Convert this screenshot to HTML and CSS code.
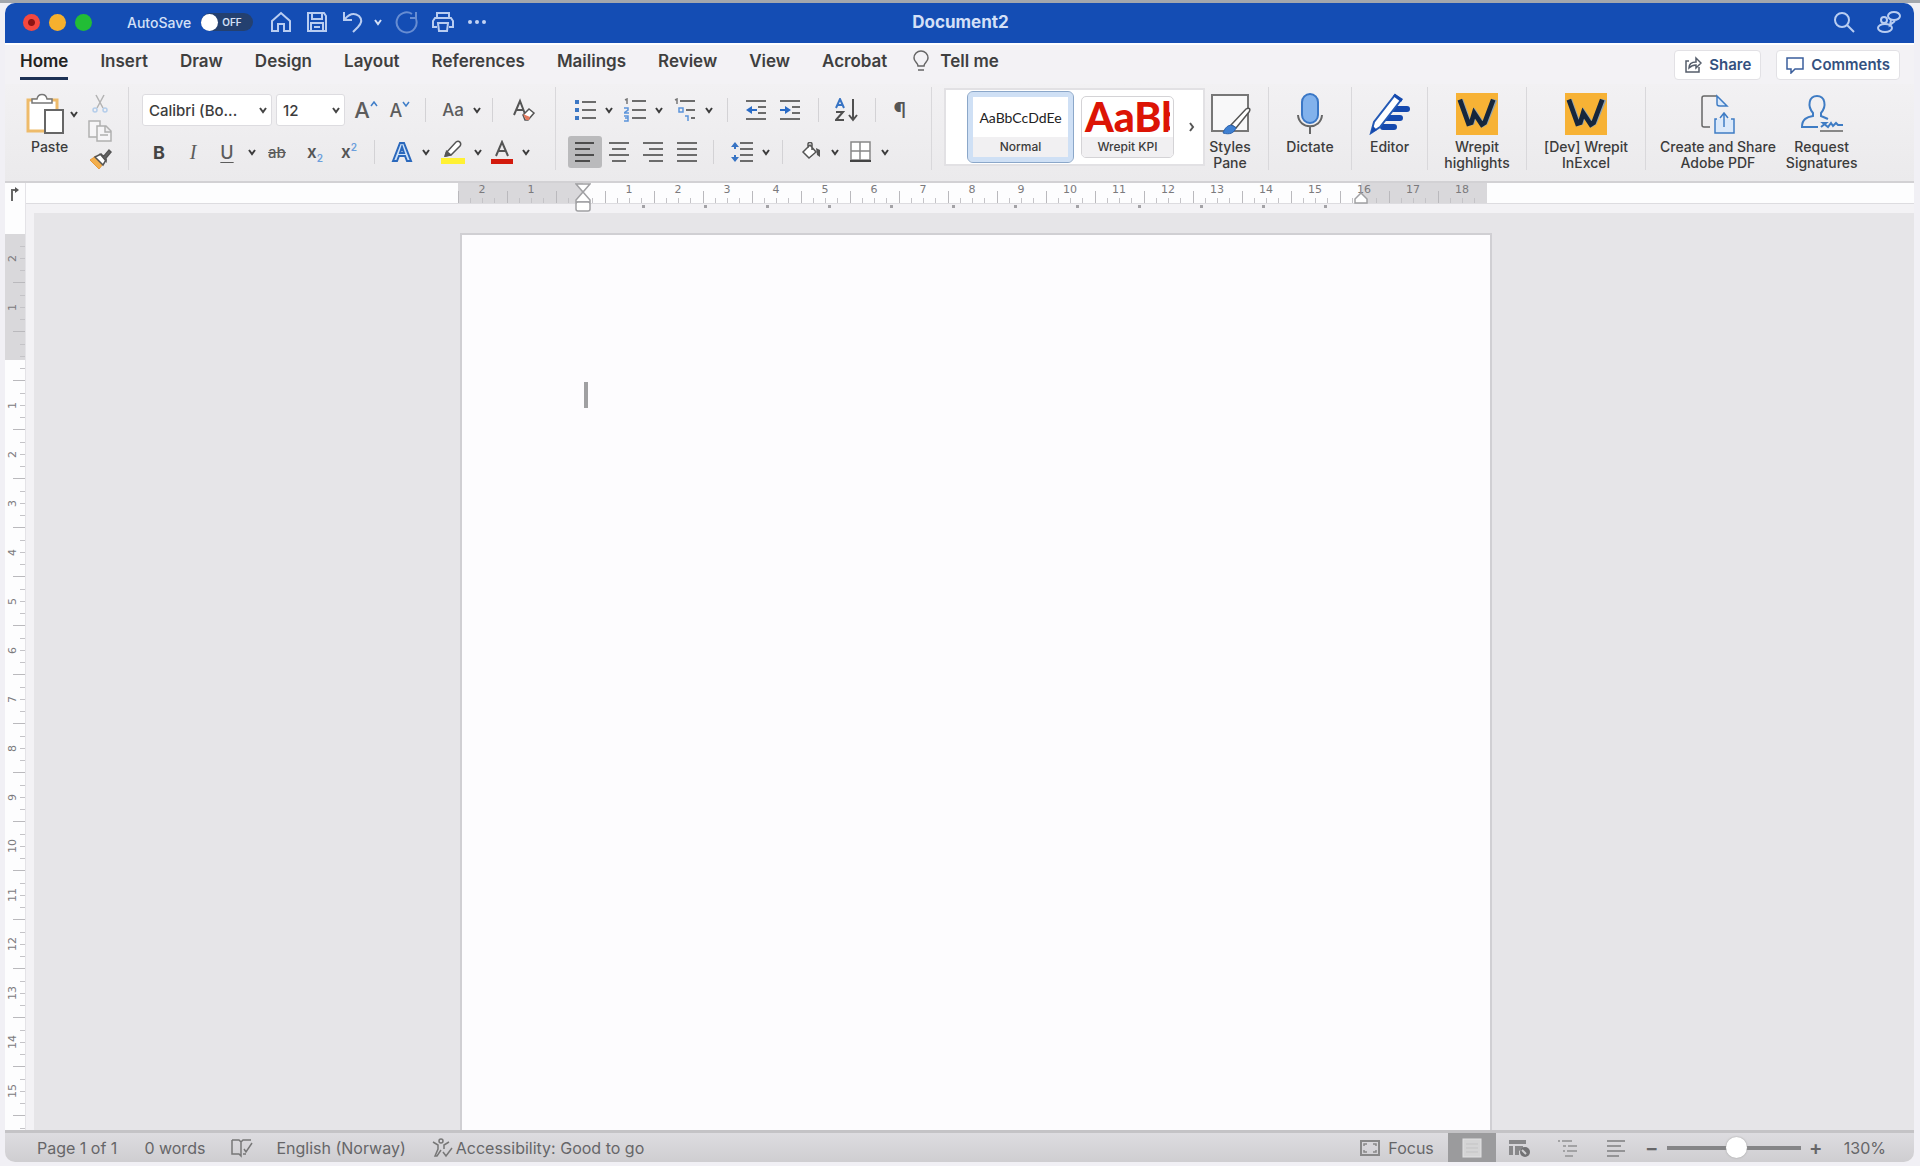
FILE: index.html
```html
<!DOCTYPE html>
<html lang="en">
<head>
<meta charset="utf-8">
<title>Document2</title>
<link rel="stylesheet" href="styles.css">
</head>
<body>
<svg class="sprite" aria-hidden="true">
  <symbol id="chevron" viewBox="0 0 10 10"><path d="M2 3l3 4 3-4" fill="none" stroke="currentColor" stroke-width="2"/></symbol>
  <symbol id="wrepit" viewBox="0 0 44 44"><rect width="44" height="44" fill="#f7b235"/><path d="M5 7l9 25 3-1 3-10 8 12 3-2 10-24" fill="none" stroke="#93a4ae" stroke-width="5"/><path d="M4 7l9 25 3-1 3-10 8 12 3-2 9-24" fill="none" stroke="#16263c" stroke-width="5"/></symbol>
</svg>
<div class="window">
  <header class="titlebar">
    <div class="titlebar-left">
      <div class="lights">
        <button class="light light-close" aria-label="Close"></button>
        <button class="light light-min" aria-label="Minimise"></button>
        <button class="light light-max" aria-label="Full screen"></button>
      </div>
      <label class="autosave" for="autosave">AutoSave
        <span class="switch"><input type="checkbox" id="autosave"><span class="switch-text">OFF</span></span>
      </label>
      <div class="quick">
        <button aria-label="Home"><svg width="24" height="24" viewBox="0 0 24 24"><path d="M3 11l9-8 9 8v10h-6v-7H9v7H3z"/></svg></button>
        <button aria-label="Save"><svg width="24" height="24" viewBox="0 0 24 24"><path d="M3 3h16l2 3v15H3zM7 3v6h10V3M6 21v-8h12v8M9 17h6"/></svg></button>
        <button class="undo" aria-label="Undo"><svg width="24" height="24" viewBox="0 0 24 24"><path d="M3 2v8h8M4 9c5-6 10-6 14-3 4 4 2 8-1 11l-5 5"/></svg><svg width="10" height="10"><use href="#chevron"/></svg></button>
        <button class="faded" aria-label="Redo"><svg width="24" height="24" viewBox="0 0 24 24"><path d="M17 4a10 10 0 1 0 4 5M21 2v6h-6"/></svg></button>
        <button aria-label="Print"><svg width="24" height="24" viewBox="0 0 24 24"><path d="M6 8V3h12v5M6 17H2v-6l2-3h16l2 3v6h-4M7 13h10l-1 8H8z"/></svg></button>
        <button aria-label="More"><svg width="20" height="24" viewBox="0 0 20 24"><g fill="#c3d3f3" stroke="none"><circle cx="3" cy="12" r="2"/><circle cx="10" cy="12" r="2"/><circle cx="17" cy="12" r="2"/></g></svg></button>
      </div>
    </div>
    <h1 class="title">Document2</h1>
    <div class="titlebar-right">
      <button aria-label="Search"><svg width="24" height="24" viewBox="0 0 24 24"><circle cx="10" cy="10" r="7"/><path d="M15 15l7 7"/></svg></button>
      <button aria-label="Presence"><svg width="26" height="26" viewBox="0 0 26 26"><ellipse cx="18" cy="7" rx="6" ry="4"/><path d="M15 11l-1 5 5-4"/><circle cx="8" cy="11" r="3"/><ellipse cx="9" cy="19" rx="7" ry="4"/></svg></button>
    </div>
  </header>

  <nav class="tabs">
    <a class="tab tab-active" href="#home">Home</a>
    <a class="tab" href="#insert">Insert</a>
    <a class="tab" href="#draw">Draw</a>
    <a class="tab" href="#design">Design</a>
    <a class="tab" href="#layout">Layout</a>
    <a class="tab" href="#references">References</a>
    <a class="tab" href="#mailings">Mailings</a>
    <a class="tab" href="#review">Review</a>
    <a class="tab" href="#view">View</a>
    <a class="tab" href="#acrobat">Acrobat</a>
    <a class="tab tell" href="#tell"><svg width="16" height="22" viewBox="0 0 16 22" fill="none" stroke="#666" stroke-width="1.5"><path d="M5 16c0-3-4-4-4-8a7 7 0 0 1 14 0c0 4-4 5-4 8zM5 20h6"/></svg>Tell me</a>
    <div class="tab-actions">
      <button class="pill"><svg width="18" height="18" viewBox="0 0 18 18" fill="none" stroke="#555d6b" stroke-width="1.5"><path d="M5 5H2v11h13v-5M5 12c0-4 3-6 7-6V2l5 5-5 5V9c-3 0-5 1-7 3z"/></svg>Share</button>
      <button class="pill"><svg width="18" height="18" viewBox="0 0 18 18" fill="none" stroke="#3a5e9c" stroke-width="1.5"><path d="M1 2h16v11H9l-4 4v-4H1z"/></svg>Comments</button>
    </div>
  </nav>

  <section class="ribbon" aria-label="Home tools">
    <div class="group clipboard">
      <button class="paste">
        <span class="paste-icon"><svg width="40" height="42" viewBox="0 0 40 42"><path d="M2 7h29v31H2z" fill="#fff" stroke="#eebb6a" stroke-width="3"/><path d="M6 10V6h5c1-6 9-6 10 0h5v4z" fill="#fff" stroke="#777" stroke-width="1.5"/><path d="M19 17h18v23H19z" fill="#fff" stroke="#666" stroke-width="2"/></svg><svg width="10" height="10"><use href="#chevron"/></svg></span>
        Paste
      </button>
      <div class="stack">
        <button aria-label="Cut"><svg width="22" height="20" viewBox="0 0 22 20" fill="none" stroke="#b3b3b3" stroke-width="1.5"><path d="M7 1l7 13M15 1L8 14"/><g stroke="#b4cdea"><circle cx="6" cy="16" r="2"/><circle cx="16" cy="16" r="2"/></g></svg></button>
        <button aria-label="Copy"><svg width="24" height="22" viewBox="0 0 24 22" fill="#f6f5f7" stroke="#b0b0b0" stroke-width="1.5"><path d="M1 1h11v16H1z"/><path d="M9 6h9l5 5v10H9zM17 6v6h6M12 15h8"/></svg></button>
        <button aria-label="Format painter"><svg width="24" height="22" viewBox="0 0 24 22"><path d="M2 12l9 9 4-5-7-8z" fill="#f2ae4c" stroke="#e59a3d"/><path d="M7 9l8 8 3-5-5-6z" fill="#fff" stroke="#555" stroke-width="1.5"/><path d="M13 7l3 1 5-6 2 2-5 6v3z" fill="#666" stroke="#555" stroke-width="1.5"/></svg></button>
      </div>
    </div>

    <div class="group font">
      <div class="row">
        <select class="field field-font" aria-label="Font"><option>Calibri (Bo...</option></select>
        <select class="field field-size" aria-label="Font size"><option>12</option></select>
        <button class="tool" aria-label="Grow font"><span class="glyph big">A</span><svg class="sup" width="8" height="6" viewBox="0 0 8 6"><path d="M1 5l3-4 3 4" fill="none" stroke="#3f7dc8" stroke-width="1.5"/></svg></button>
        <button class="tool" aria-label="Shrink font"><span class="glyph">A</span><svg class="sup" width="8" height="6" viewBox="0 0 8 6"><path d="M1 1l3 4 3-4" fill="none" stroke="#3f7dc8" stroke-width="1.5"/></svg></button>
        <span class="sep"></span>
        <button class="split" aria-label="Change case"><span class="glyph case">Aa</span><svg width="10" height="10"><use href="#chevron"/></svg></button>
        <span class="sep"></span>
        <button class="tool tool-clear" aria-label="Clear formatting"><svg width="24" height="24" viewBox="0 0 24 24" fill="none"><path d="M2 17L8 3l5 13M4 12h7" stroke="#555" stroke-width="2"/><path d="M11 17l6-6 5 4-6 7h-3z" fill="#fff" stroke="#555" stroke-width="1.5"/><path d="M11 16l3 6h3l1-3z" fill="#e4785c"/></svg></button>
      </div>
      <div class="row">
        <button class="tool glyph bold" aria-label="Bold">B</button>
        <button class="tool glyph italic" aria-label="Italic">I</button>
        <button class="tool glyph underline" aria-label="Underline">U</button>
        <button class="drop" aria-label="Underline styles"><svg width="10" height="10"><use href="#chevron"/></svg></button>
        <button class="tool glyph strike" aria-label="Strikethrough">ab</button>
        <button class="tool script script-first" aria-label="Subscript">x<sub>2</sub></button>
        <button class="tool script" aria-label="Superscript">x<sup>2</sup></button>
        <span class="sep"></span>
        <button class="split" aria-label="Text effects"><svg width="22" height="22" viewBox="0 0 22 22"><path d="M2 20L9 2h4l7 18h-4l-2-5H8l-2 5zM9 12h4l-2-6z" fill="#cfe2f8" stroke="#2a68bc" stroke-width="2"/></svg><svg width="10" height="10"><use href="#chevron"/></svg></button>
        <button class="split" aria-label="Highlight"><svg width="24" height="24" viewBox="0 0 24 24"><path d="M0 18h24v6H0z" fill="#fff133"/><path d="M5 13L15 2c3-2 6 1 4 4l-9 9-6 1z" fill="#fff" stroke="#555" stroke-width="1.5"/><path d="M5 10l6 5-7 2z" fill="#555"/></svg><svg width="10" height="10"><use href="#chevron"/></svg></button>
        <button class="split" aria-label="Font colour"><svg width="22" height="24" viewBox="0 0 22 24"><path d="M5 16l6-14 6 14M7 11h8" fill="none" stroke="#555" stroke-width="2"/><path d="M0 19h22v5H0z" fill="#d31a0d"/></svg><svg width="10" height="10"><use href="#chevron"/></svg></button>
      </div>
    </div>

    <div class="group paragraph">
      <div class="row">
        <button class="split" aria-label="Bullets"><svg width="22" height="22" viewBox="0 0 22 22" stroke="#6c6c6c" stroke-width="2"><path d="M8 3h14M8 11h14M8 19h14"/><path d="M1 3h4M1 11h4M1 19h4" stroke="#3b77c4" stroke-width="4"/></svg><svg width="10" height="10"><use href="#chevron"/></svg></button>
        <button class="split" aria-label="Numbering"><svg width="22" height="24" viewBox="0 0 22 24" stroke="#6c6c6c" stroke-width="2"><path d="M8 3h14M8 12h14M8 20h14"/><path d="M1 2l2-1v5" fill="none" stroke="#777" stroke-width="1.5"/><path d="M0 10h4v2l-4 3h5M0 18h4v5H0M1 20h3" fill="none" stroke="#5b94da" stroke-width="1.5"/></svg><svg width="10" height="10"><use href="#chevron"/></svg></button>
        <button class="split" aria-label="Multilevel list"><svg width="22" height="24" viewBox="0 0 22 24" stroke="#6c6c6c" stroke-width="2"><path d="M6 3h15M12 12h9M17 20h4"/><path d="M1 2l2-1v5" fill="none" stroke="#777" stroke-width="1.5"/><path d="M5 10h4v4H5zM11 18h3v5" fill="none" stroke="#5b94da" stroke-width="1.5"/></svg><svg width="10" height="10"><use href="#chevron"/></svg></button>
        <span class="sep"></span>
        <button class="tool" aria-label="Decrease indent"><svg width="20" height="20" viewBox="0 0 20 20" stroke="#6c6c6c" stroke-width="2"><path d="M0 1h20M12 7h8M12 13h8M0 19h20"/><path d="M11 10H5" stroke="#2a6bc6"/><path d="M0 10l6-4v8z" fill="#2a6bc6" stroke="none"/></svg></button>
        <button class="tool" aria-label="Increase indent"><svg width="20" height="20" viewBox="0 0 20 20" stroke="#6c6c6c" stroke-width="2"><path d="M0 1h20M12 7h8M12 13h8M0 19h20"/><path d="M0 10h6" stroke="#2a6bc6"/><path d="M11 10L5 6v8z" fill="#2a6bc6" stroke="none"/></svg></button>
        <span class="sep"></span>
        <button class="tool" aria-label="Sort"><svg width="24" height="24" viewBox="0 0 24 24" fill="none" stroke="#505050" stroke-width="2"><path d="M1 10l4-9 4 9M2 7h6" stroke="#3874c4"/><path d="M1 14h7l-7 8h8M18 1v20M14 17l4 5 4-5"/></svg></button>
        <span class="sep"></span>
        <button class="pilcrow" aria-label="Show formatting marks">¶</button>
      </div>
      <div class="row row-align">
        <button class="tool tool-on" aria-label="Align left"><svg width="20" height="20" viewBox="0 0 20 20" stroke="#4c4c4c" stroke-width="2"><path d="M0 1h19M0 7h15M0 13h19M0 19h15"/></svg></button>
        <button class="tool" aria-label="Centre"><svg width="20" height="20" viewBox="0 0 20 20" stroke="#6c6c6c" stroke-width="2"><path d="M0 1h20M3 7h14M0 13h20M3 19h14"/></svg></button>
        <button class="tool" aria-label="Align right"><svg width="20" height="20" viewBox="0 0 20 20" stroke="#6c6c6c" stroke-width="2"><path d="M0 1h20M6 7h14M0 13h20M6 19h14"/></svg></button>
        <button class="tool" aria-label="Justify"><svg width="20" height="20" viewBox="0 0 20 20" stroke="#6c6c6c" stroke-width="2"><path d="M0 1h20M0 7h20M0 13h20M0 19h20"/></svg></button>
        <span class="sep"></span>
        <button class="split" aria-label="Line spacing"><svg width="22" height="22" viewBox="0 0 22 22" stroke="#6c6c6c" stroke-width="2"><path d="M9 2h13M9 8h13M9 14h13M9 20h13"/><path d="M4 3v5M4 14v5" stroke="#3874c4"/><path d="M0 6l4-5 4 5zM0 16l4 5 4-5z" fill="#3874c4" stroke="none"/></svg><svg width="10" height="10"><use href="#chevron"/></svg></button>
        <span class="sep"></span>
        <button class="split" aria-label="Shading"><svg width="22" height="20" viewBox="0 0 22 20"><path d="M3 10l7-7 6 7-7 6zM8 6V2c0-2 4-2 4 0v6" fill="#fff" stroke="#555" stroke-width="1.5"/><path d="M16 6l4 2v7l-3-2z" fill="#555"/></svg><svg width="10" height="10"><use href="#chevron"/></svg></button>
        <button class="split" aria-label="Borders"><svg width="22" height="22" viewBox="0 0 22 22" fill="#fff" stroke="#888" stroke-width="1.5"><path d="M1 1h19v18H1zM10 1v18M1 10h19"/><path d="M0 20h21" stroke="#444" stroke-width="2"/></svg><svg width="10" height="10"><use href="#chevron"/></svg></button>
      </div>
    </div>

    <div class="group styles">
      <div class="gallery">
        <button class="style style-on"><span class="sample">AaBbCcDdEe</span><span class="style-name">Normal</span></button>
        <button class="style"><span class="sample sample-kpi">AaBb</span><span class="style-name">Wrepit KPI</span></button>
        <button class="more" aria-label="More styles"><svg width="8" height="12" viewBox="0 0 8 12"><path d="M2 2l3 4-3 4" fill="none" stroke="#555" stroke-width="2"/></svg></button>
      </div>
      <button class="large large-styles"><svg width="42" height="42" viewBox="0 0 42 42"><path d="M3 2h36v36H3z" fill="#f8f8f9" stroke="#777" stroke-width="2"/><path d="M22 32l15-16c3-2 5 0 3 3L27 35z" fill="#fff" stroke="#555" stroke-width="1.5"/><path d="M14 40c3-8 8-10 13-5-2 5-6 7-13 5z" fill="#3f80d2" stroke="#2c62ab"/></svg>Styles<br>Pane</button>
    </div>
    <div class="group w-dictate"><button class="large"><svg width="30" height="42" viewBox="0 0 30 42" fill="none"><rect x="7" y="1" width="16" height="29" rx="8" fill="#82b2ec" stroke="#3a77c6" stroke-width="2"/><path d="M3 22c1 15 23 15 24 0M15 33v8" stroke="#666" stroke-width="2"/></svg>Dictate</button></div>
    <div class="group w-editor"><button class="large"><svg width="42" height="42" viewBox="0 0 42 42"><path d="M20 16h18M14 25h17M14 34h11" stroke="#1549ae" stroke-width="6" stroke-linecap="round"/><path d="M2 40l3-11L26 2l6 5-21 27z" fill="#fff" stroke="#2459b5" stroke-width="2"/><path d="M24 3l8 6 2-3-8-5zM2 40l2-7 4 4z" fill="#1549ae"/></svg>Editor</button></div>
    <div class="group w-wrepit"><button class="large"><svg width="44" height="42"><use href="#wrepit"/></svg>Wrepit<br>highlights</button></div>
    <div class="group w-dev"><button class="large"><svg width="44" height="42"><use href="#wrepit"/></svg>[Dev] Wrepit<br>InExcel</button></div>
    <div class="group adobe">
      <button class="large large-pdf"><svg width="36" height="42" viewBox="0 0 36 42" fill="none" stroke="#3f7cc4" stroke-width="1.5"><path d="M10 34H4c-2 0-2-1-2-2V5c0-2 1-2 2-2h13" stroke="#666"/><path d="M17 3l10 10h-7c-3 0-3-1-3-3zM17 26h-2v14h19V26h-3M24 34V21M20 25l4-5 4 5" fill="#dbe9fa"/></svg>Create and Share<br>Adobe PDF</button>
      <button class="large"><svg width="44" height="42" viewBox="0 0 44 42" fill="none" stroke="#3f7cc4" stroke-width="2"><path d="M18 34H2c0-8 5-10 11-11v-3C7 13 9 3 17 3s10 10 4 17v3l7 3"/><path d="M21 34l5-4-3 0 5 4 3-4 2 3 3-3 2 2h5"/><path d="M20 38h23" stroke="#888"/></svg>Request<br>Signatures</button>
    </div>
  </section>

  <div class="ruler-bar">
    <button class="tab-stop" aria-label="Tab stop"><svg width="10" height="16" viewBox="0 0 10 16"><path d="M2 15V4h4" fill="none" stroke="#666" stroke-width="2"/><path d="M5 1l4 3-4 3z" fill="#555"/></svg></button>
    <div class="ruler-track">
      <div class="ruler">
        <span>2</span><span>1</span><span></span><span>1</span><span>2</span><span>3</span><span>4</span><span>5</span><span>6</span><span>7</span><span>8</span><span>9</span><span>10</span><span>11</span><span>12</span><span>13</span><span>14</span><span>15</span><span>16</span><span>17</span><span>18</span>
        <div class="defaults"></div>
        <svg class="indent-left" width="16" height="30" viewBox="0 0 16 30" fill="#fff" stroke="#a0a0a3" stroke-width="1.5"><path d="M1 1h14L8 9zM8 9l7 8v2H1v-2z"/><rect x="1" y="19" width="14" height="9" rx="2"/></svg>
        <svg class="indent-right" width="16" height="12" viewBox="0 0 16 12" fill="#fff" stroke="#a0a0a3" stroke-width="1.5"><path d="M8 1l6 6v4H2V7z"/></svg>
      </div>
    </div>
  </div>

  <div class="workspace">
    <div class="v-ruler">
      <div class="v-marks"><span>2</span><span>1</span><span></span><span>1</span><span>2</span><span>3</span><span>4</span><span>5</span><span>6</span><span>7</span><span>8</span><span>9</span><span>10</span><span>11</span><span>12</span><span>13</span><span>14</span><span>15</span><span></span></div>
    </div>
    <main class="canvas">
      <article class="page" aria-label="Page 1"><div class="caret"></div></article>
    </main>
  </div>

  <footer class="status">
    <span class="pages">Page 1 of 1</span>
    <span class="words">0 words</span>
    <button class="proof" aria-label="Proofing"><svg width="22" height="20" viewBox="0 0 22 20" fill="none" stroke="#777" stroke-width="1.5"><path d="M1 2h7l2 2 2-2h8M1 2v14h7l2 2V4M12 16h3M13 11l2 3 6-9"/></svg></button>
    <button class="lang">English (Norway)</button>
    <button class="access"><svg width="22" height="20" viewBox="0 0 22 20" fill="none" stroke="#777" stroke-width="1.5"><circle cx="9" cy="3" r="2"/><path d="M1 4l5 3v4l-3 7h2l4-6M17 4l-5 3v4M11 14l3 4 6-8"/></svg>Accessibility: Good to go</button>
    <div class="status-right">
      <button class="focus"><svg width="20" height="16" viewBox="0 0 20 16" fill="none" stroke="#888" stroke-width="2"><rect x="1" y="1" width="18" height="14"/><path d="M4 6V4h3M13 4h3v2M16 10v2h-3M7 12H4v-2" stroke-width="1.5"/></svg>Focus</button>
      <button class="mode mode-on" aria-label="Print layout"><svg width="20" height="20" viewBox="0 0 20 20"><rect x="1" y="1" width="18" height="18" fill="#d4d4d5" stroke="#e2e2e3"/><path d="M4 6h12M4 10h12M4 14h12" stroke="#c3c3c4"/></svg></button>
      <button class="mode" aria-label="Web layout"><svg width="22" height="20" viewBox="0 0 22 20"><path d="M0 2h17v4H0zM0 8h4v9H0zM6 8h8v2l-4 3v4H6z" fill="#88888a"/><circle cx="16" cy="14" r="5" fill="#727274"/><path d="M13 12l4 4" stroke="#d0d0d2" stroke-width="2"/></svg></button>
      <button class="mode" aria-label="Outline"><svg width="20" height="18" viewBox="0 0 20 18" stroke="#a2a2a4" stroke-width="2"><path d="M0 2h2M4 2h10M5 7h3M10 7h9M5 12h2M9 12h10M7 17h8"/></svg></button>
      <button class="mode" aria-label="Draft"><svg width="18" height="18" viewBox="0 0 18 18" stroke="#949496" stroke-width="2"><path d="M0 2h18M0 7h14M0 12h18M0 17h12"/></svg></button>
      <button class="zoom-step zoom-out" aria-label="Zoom out">−</button>
      <input class="zoom" type="range" min="0" max="100" value="52" aria-label="Zoom">
      <button class="zoom-step" aria-label="Zoom in">+</button>
      <span class="percent">130%</span>
    </div>
  </footer>
</div>
</body>
</html>
```
FILE: styles.css
```css
* { box-sizing: border-box; }

body {
  margin: 0;
  height: 100vh;
  padding: 3px 6px 4px 5px;
  background: linear-gradient(#a3a7ad 0 3px, #f1f0f5 3px);
  font-family: Inter, "Liberation Sans", sans-serif;
  color: #3c3c3c;
}

button {
  display: flex;
  align-items: center;
  justify-content: center;
  padding: 0;
  border: 0;
  background: none;
  color: inherit;
  font: inherit;
}

svg { display: block; flex: none; }
.sprite { position: absolute; width: 0; height: 0; }

.window {
  display: flex;
  flex-direction: column;
  height: 100%;
  overflow: hidden;
  border-radius: 10px;
  background: #f3f2f5;
}

/* Title bar */
.titlebar {
  flex: none;
  display: grid;
  grid-template-columns: 1fr auto 1fr;
  align-items: center;
  height: 40px;
  padding: 0 12px 2px 18px;
  background: #144db4;
  color: #d4e0f7;
}
.titlebar svg { fill: none; stroke: #b9cdf1; stroke-width: 2; }
.titlebar-left, .titlebar-right, .lights, .quick, .autosave { display: flex; align-items: center; }
.titlebar-right { justify-content: flex-end; gap: 20px; }
.lights { gap: 9px; }
.light { width: 17px; height: 17px; border-radius: 50%; }
.light-close { background: radial-gradient(#8c1414 0 3px, #f4483f 4px); }
.light-min { background: #f6b02e; }
.light-max { background: #22bd36; }
.autosave { margin-left: 35px; gap: 10px; font-size: 14px; font-weight: 500; }
.switch {
  display: flex;
  align-items: center;
  width: 52px;
  height: 18px;
  border-radius: 9px;
  background: #24406f;
}
.switch input { appearance: none; width: 17px; height: 17px; margin: 0; border-radius: 50%; background: #fff; }
.switch-text { margin-left: 4px; font-size: 10px; font-weight: 600; }
.quick { margin-left: 16px; gap: 12px; }
.undo { gap: 8px; }
.faded { opacity: 0.5; }
.title { margin: 0; padding-right: 4px; font-size: 17px; line-height: 20px; font-weight: 700; }

/* Ribbon tabs */
.tabs {
  flex: none;
  display: flex;
  gap: 32px;
  height: 41px;
  padding: 0 14px 0 15px;
  border-top: 2px solid #fff;
}
.tab {
  display: flex;
  align-items: center;
  height: 35px;
  color: #3f3f3f;
  font-size: 17px;
  font-weight: 600;
  text-decoration: none;
  border-bottom: 3px solid transparent;
}
.tab-active { color: #222; border-color: #1c3154; }
.tell { gap: 11px; margin-left: -6px; }
.tab-actions { display: flex; align-items: center; gap: 15px; margin-left: auto; }
.pill {
  height: 30px;
  gap: 7px;
  padding: 0 9px;
  border: 1px solid #e2e1e5;
  border-radius: 4px;
  background: #fff;
  color: #34517f;
  font-size: 15px;
  font-weight: 600;
}

/* Ribbon */
.ribbon {
  flex: none;
  display: flex;
  height: 99px;
  padding: 3px 0 11px;
  border-bottom: 2px solid #d2d1d4;
  background: linear-gradient(#f2f1f3, #ebeaec);
}
.group { flex: none; border-right: 1px solid #d9d8db; }
.group:last-child { border: 0; }
.clipboard { display: flex; width: 124px; padding-left: 21px; }
.paste {
  flex-direction: column;
  justify-content: flex-start;
  gap: 4px;
  width: 54px;
  align-items: flex-start;
  padding-top: 6px;
  font-size: 14px;
  line-height: 16px;
  font-weight: 500;
  text-indent: 5px;
}
.paste-icon { display: flex; align-items: center; gap: 3px; }
.stack { display: flex; flex-direction: column; gap: 6px; padding: 7px 0 0 8px; }
.font { width: 427px; padding: 7px 0 0 13px; }
.paragraph { width: 376px; padding: 7px 0 0 10px; }
.row { display: flex; align-items: center; height: 32px; margin-bottom: 10px; }
.sep { width: 1px; height: 24px; margin: 0 8px; background: #d3d2d5; }
.paragraph .sep { margin: 0 11px; }
.row-align { padding-left: 2px; }
.row-align .sep { margin: 0 9px; }
.tool { flex: none; width: 34px; height: 32px; }
.tool-on { border-radius: 3px; background: #bababc; }
.tool-clear { width: 46px; }
.split { flex: none; justify-content: flex-start; gap: 8px; width: 50px; height: 32px; padding-left: 8px; }
.drop { flex: none; width: 16px; height: 32px; }
.field {
  height: 32px;
  margin-right: 4px;
  padding: 0 6px;
  border: 1px solid #dddce0;
  border-radius: 3px;
  appearance: none;
  background: #fff url("data:image/svg+xml,%3Csvg xmlns='http://www.w3.org/2000/svg' width='10' height='10'%3E%3Cpath d='M2 3l3 4 3-4' fill='none' stroke='%23444' stroke-width='2'/%3E%3C/svg%3E") no-repeat right 3px center;
  color: #3c3c3c;
  font: 500 15px Inter, sans-serif;
}
.field-font { width: 130px; }
.field-size { width: 69px; }
.glyph { color: #5c5c5c; font-size: 18px; font-weight: 500; }
.big { font-size: 22px; }
.case { width: 22px; font-size: 17px; }
.sup { align-self: flex-start; margin-top: 7px; }
.bold { color: #444; font-weight: 700; }
.italic { font-family: "Liberation Serif", serif; font-style: italic; font-size: 20px; }
.underline { text-decoration: underline; text-underline-offset: 3px; }
.strike { font-size: 15px; text-decoration: line-through; }
.script { display: block; color: #555; font-size: 17px; font-weight: 600; line-height: 32px; }
.script-first { margin-left: 4px; }
.script sub, .script sup { color: #6c9fdc; font-size: 10px; line-height: 10px; }
.pilcrow { width: 26px; height: 32px; color: #555; font-size: 22px; }

.styles { display: flex; width: 337px; padding-left: 12px; }
.gallery {
  display: flex;
  align-items: center;
  gap: 8px;
  width: 261px;
  height: 78px;
  margin-top: 1px;
  padding-left: 22px;
  border: 2px solid #e2e1e4;
  background: #fff;
}
.style {
  flex-direction: column;
  justify-content: flex-end;
  width: 93px;
  height: 62px;
  overflow: hidden;
  border: 1px solid #d4d3d6;
  border-radius: 5px;
  background: #fff;
}
.style-on {
  width: 105px;
  height: 70px;
  border: 5px solid #cfe0f5;
  outline: 1px solid #8ba7c9;
}
.sample { flex: 1; display: flex; align-items: center; color: #222; font: 14px Lato, sans-serif; }
.sample-kpi {
  flex: none;
  align-self: flex-start;
  width: 88px;
  height: 40px;
  padding-left: 3px;
  overflow: hidden;
  color: #dc1405;
  font: 900 41px/40px Lato, sans-serif;
}
.style-name { width: 100%; height: 20px; background: #f1f0f2; font-size: 12px; line-height: 20px; font-weight: 500; }
.more { width: 12px; height: 40px; margin-left: 4px; }
.large {
  flex-direction: column;
  justify-content: flex-start;
  gap: 4px;
  width: 100%;
  padding-top: 6px;
  font-size: 14px;
  line-height: 16px;
  font-weight: 500;
  white-space: nowrap;
}
.large-styles { width: 50px; }
.w-dictate { width: 83px; }
.w-editor { width: 76px; }
.w-wrepit { width: 99px; }
.w-dev { width: 119px; }
.adobe { display: flex; gap: 10px; padding-left: 14px; }
.adobe .large { width: auto; }

/* Horizontal ruler */
.ruler-bar { flex: none; display: flex; height: 30px; background: #f3f2f5; }
.tab-stop { width: 21px; height: 21px; border-right: 1px solid #e4e3e7; background: #fdfdfe; }
.ruler-track {
  flex: 1;
  display: flex;
  justify-content: center;
  height: 21px;
  padding-left: 4px;
  border-bottom: 1px solid #dddce0;
  background: #fdfdfe;
}
.ruler {
  position: relative;
  display: flex;
  width: 1029px;
  height: 20px;
  background: linear-gradient(90deg, #d9d8db 125px, #fdfdfe 125px 903px, #d9d8db 903px);
}
.ruler span {
  width: 49px;
  background:
    linear-gradient(#bab9bd, #bab9bd) 0 100% / 1px 12px no-repeat,
    linear-gradient(#c4c3c7, #c4c3c7) 12px 100% / 1px 5px no-repeat,
    linear-gradient(#c4c3c7, #c4c3c7) 24px 100% / 1px 5px no-repeat,
    linear-gradient(#c4c3c7, #c4c3c7) 36px 100% / 1px 5px no-repeat;
}
.ruler span, .v-marks span {
  color: #7b7a7d;
  font: 11px/13px "DejaVu Sans", sans-serif;
  text-align: center;
}
.defaults {
  position: absolute;
  left: 125px;
  top: 22px;
  width: 747px;
  height: 3px;
  background: linear-gradient(90deg, transparent 59px, #a3a2a6 59px) 0 0 / 62px 3px;
}
.indent-left { position: absolute; left: 117px; top: 0; }
.indent-right { position: absolute; left: 895px; top: 9px; }

/* Work area */
.workspace { flex: 1; display: flex; min-height: 0; margin-top: -9px; }
.v-ruler { flex: none; width: 21px; padding-top: 30px; overflow: hidden; border-right: 1px solid #e4e3e7; background: #fdfdfe; }
.v-marks { background: linear-gradient(#d9d8db 126px, #fdfdfe 126px); }
.v-marks span {
  display: block;
  width: 20px;
  height: 49px;
  padding-right: 1px;
  writing-mode: vertical-rl;
  transform: rotate(180deg);
  background:
    linear-gradient(#bab9bd, #bab9bd) 0 0 / 12px 1px no-repeat,
    linear-gradient(#c4c3c7, #c4c3c7) 0 12px / 5px 1px no-repeat,
    linear-gradient(#c4c3c7, #c4c3c7) 0 24px / 5px 1px no-repeat,
    linear-gradient(#c4c3c7, #c4c3c7) 0 36px / 5px 1px no-repeat;
}
.canvas {
  flex: 1;
  display: flex;
  justify-content: center;
  margin: 9px 0 0 8px;
  padding: 20px 0 0 4px;
  overflow: hidden;
  background: #e6e5e8;
}
.page {
  width: 1032px;
  height: 1460px;
  padding: 147px 122px;
  border: 2px solid #d0cfd3;
  background: #fdfcfe;
}
.caret { width: 4px; height: 26px; background: #a0a0a2; }

/* Status bar */
.status {
  flex: none;
  display: flex;
  align-items: center;
  height: 32px;
  padding-left: 32px;
  border-top: 3px solid #c4c3c6;
  background: linear-gradient(#dddce0, #cfced1);
  color: #666668;
  font-size: 16px;
  line-height: 20px;
}
.words { margin-left: 27px; }
.proof { margin-left: 26px; }
.lang { margin-left: 23px; }
.access { gap: 2px; margin-left: 26px; }
.status-right { display: flex; align-items: center; height: 100%; margin-left: auto; padding-right: 28px; }
.focus { gap: 8px; margin-right: 14px; }
.mode { width: 48px; height: 100%; }
.mode-on { background: #9b9b9d; }
.zoom-step { width: 16px; font-size: 20px; font-weight: 600; }
.zoom-out { margin-left: 4px; }
.zoom {
  appearance: none;
  width: 134px;
  height: 20px;
  margin: 0 7px;
  background: linear-gradient(#858587, #858587) center / 100% 4px no-repeat;
}
.zoom::-webkit-slider-thumb { appearance: none; width: 21px; height: 21px; border-radius: 50%; background: #fff; box-shadow: 0 0 2px #999; }
.percent { margin-left: 20px; }
```
